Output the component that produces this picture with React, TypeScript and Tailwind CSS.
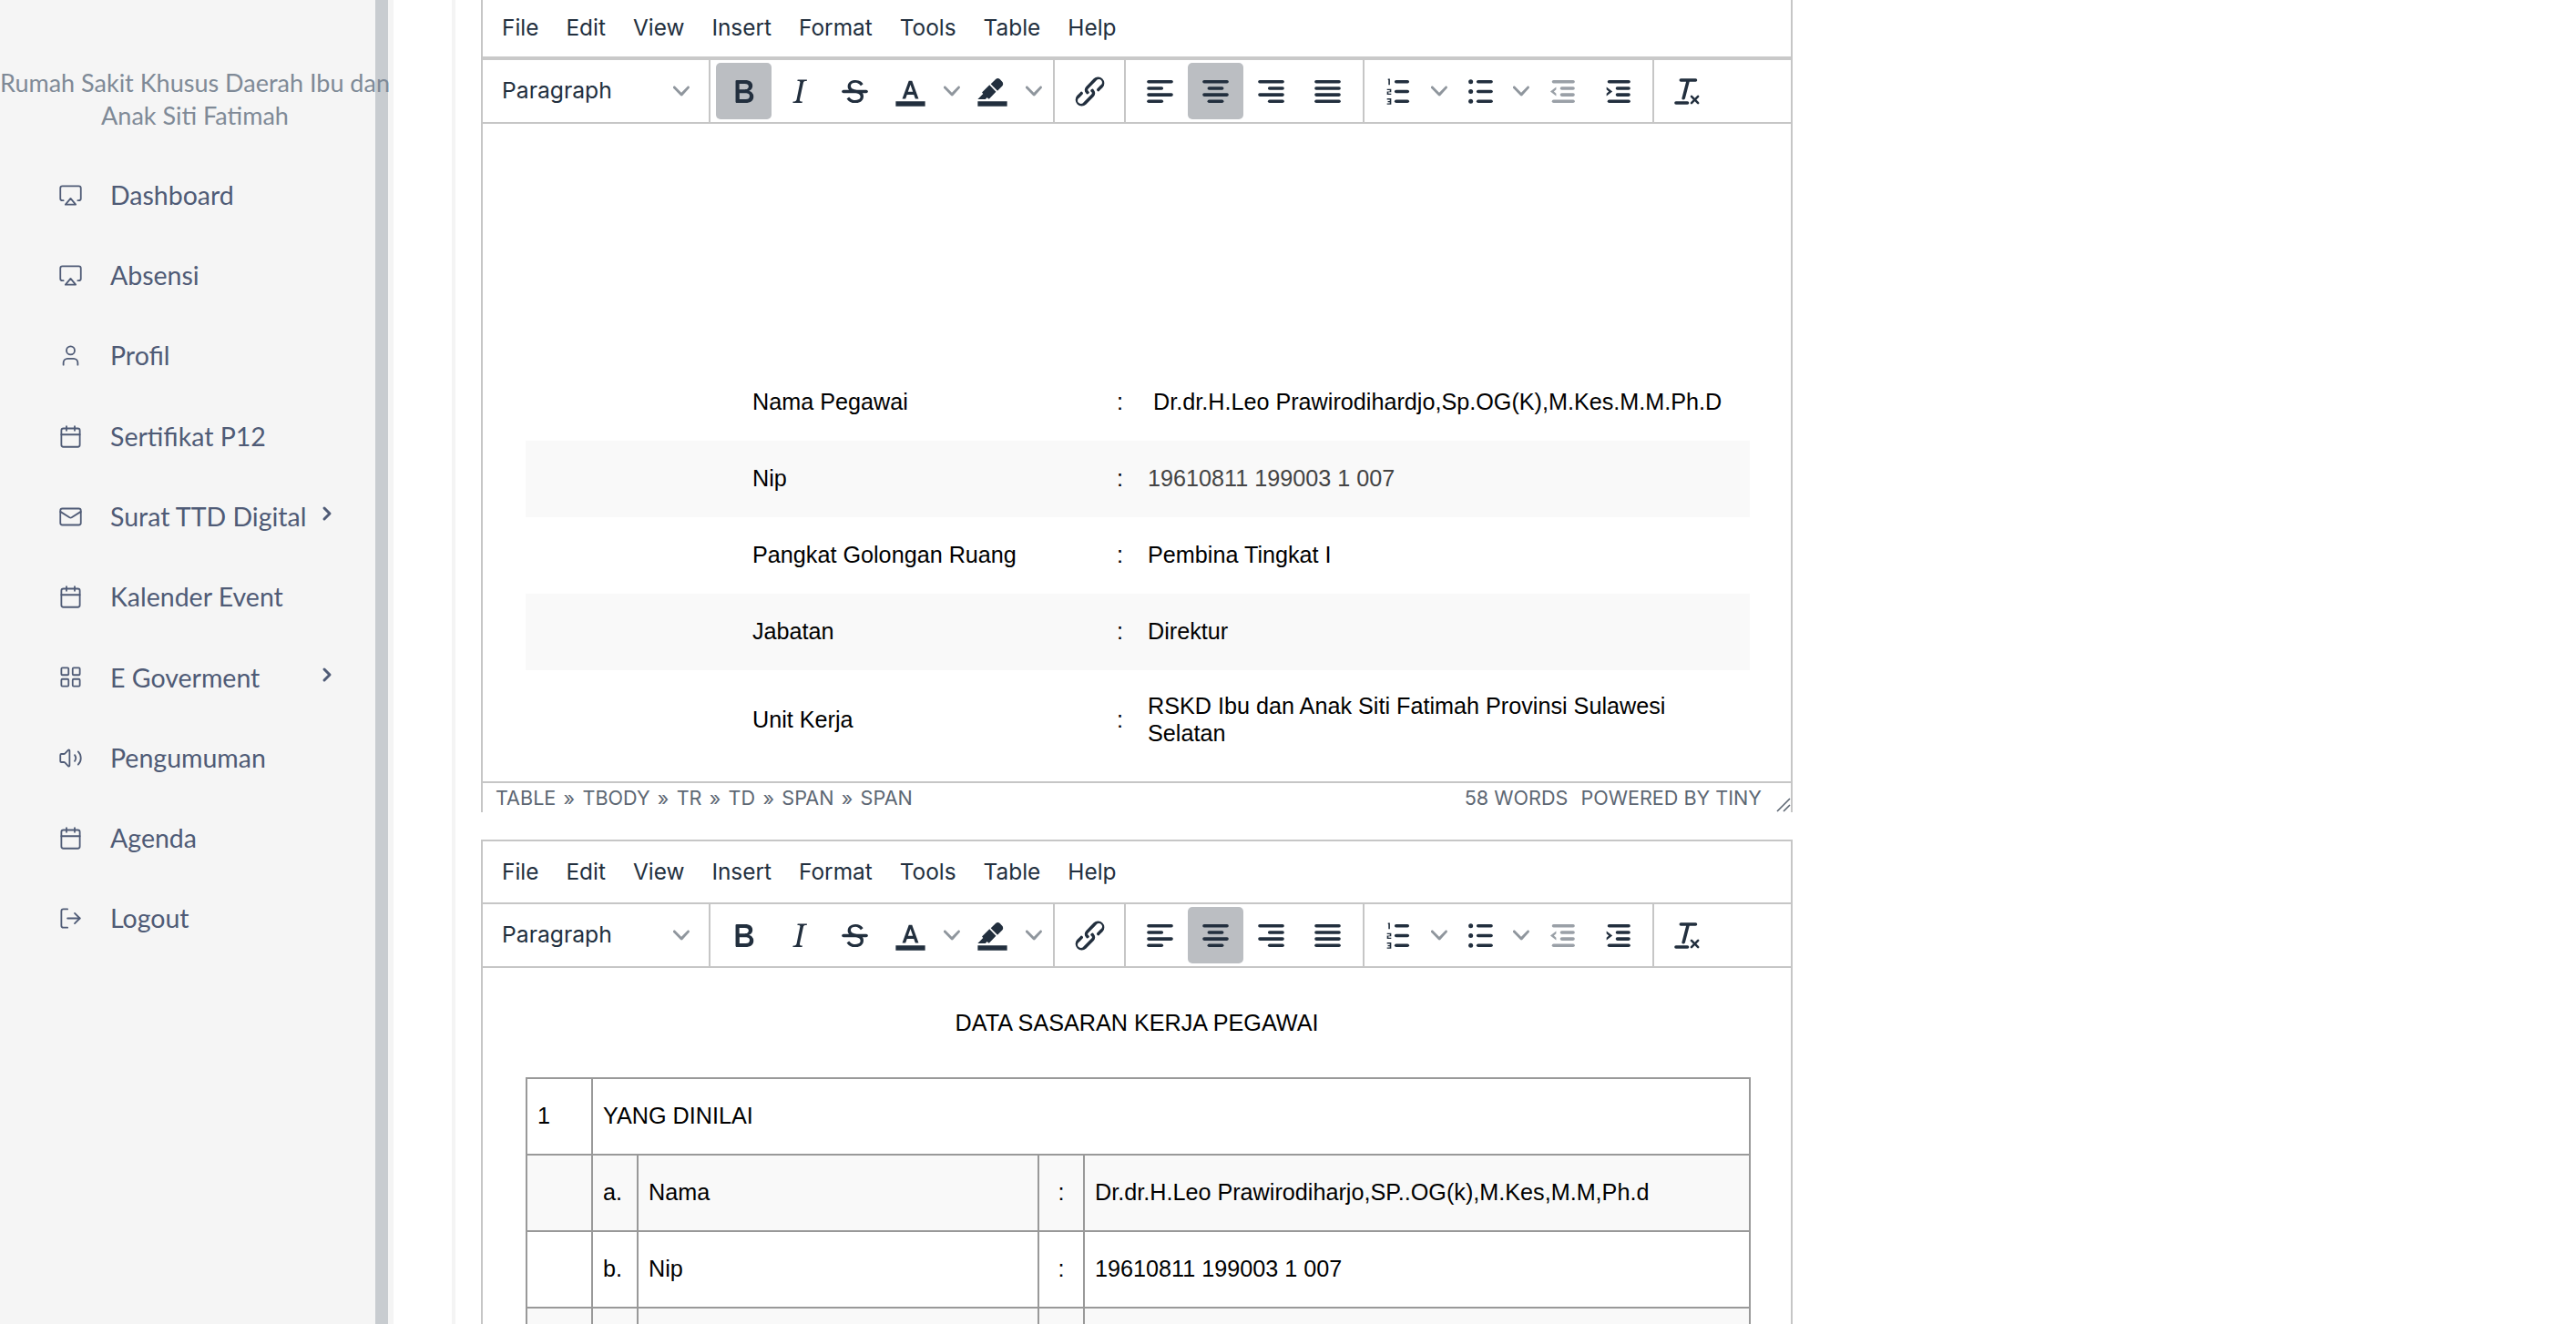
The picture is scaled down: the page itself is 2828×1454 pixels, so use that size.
import React from "react";
import { Airplay, User, Calendar, Mail, LayoutGrid, Volume2, LogOut, ChevronRight } from "lucide-react";

const I = ({ children }: { children: React.ReactNode }) => (
  <svg viewBox="0 0 24 24" width="43" height="43" fill="#222f3e">{children}</svg>
);

const Lines = ({ rows }: { rows: [number, number, number][] }) => (
  <>
    {rows.map(([a, b, y], i) => (
      <line key={i} x1={a} x2={b} y1={y} y2={y} stroke="#222f3e" strokeWidth="2" strokeLinecap="round" />
    ))}
  </>
);

const icons: Record<string, React.ReactNode> = {
  bold: <path d="M7.8 19c-.3 0-.5 0-.6-.2l-.2-.5V5.7c0-.2 0-.4.2-.5l.6-.2h5c1.5 0 2.7.3 3.5 1 .7.6 1.1 1.4 1.1 2.5a3 3 0 0 1-.6 1.9c-.4.6-1 1-1.6 1.2.4.1.9.3 1.3.6s.8.7 1 1.2c.4.4.5 1 .5 1.6 0 1.3-.4 2.3-1.3 3-.8.7-2.1 1-3.8 1H7.8zm5-8.3c.6 0 1.2-.1 1.6-.5.4-.3.6-.7.6-1.3 0-1.1-.8-1.7-2.3-1.7H9.3v3.5h3.4zm.5 6c.7 0 1.3-.1 1.7-.4.4-.4.6-.9.6-1.5s-.2-1-.7-1.4c-.4-.3-1-.4-2-.4H9.4v3.8h4z" />,
  italic: <path d="M16.7 4.7l-.1.9h-.3c-.6 0-1 0-1.4.3-.3.3-.4.6-.5 1.1l-2.1 9.8v.6c0 .5.4.8 1.4.8h.2l-.2.8H8l.2-.8h.2c1.1 0 1.8-.5 2-1.5l2-9.8.1-.5c0-.6-.4-.8-1.4-.8h-.3l.2-.9h5.8z" />,
  strike: (
    <>
      <path d="M15.6 8.5c-.5-.7-1-1.1-1.3-1.3-.6-.4-1.3-.6-2-.6-2.7 0-2.8 1.7-2.8 2.1 0 1.6 1.8 2 3.2 2.3 4.4.9 4.6 2.8 4.6 3.9 0 1.4-.7 4.1-5 4.1A6.2 6.2 0 0 1 7 16.4l1.5-1.1c.4.6 1.6 2 3.7 2 1.6 0 2.5-.4 3-1.2.4-.8.3-2-.8-2.6-.7-.4-1.6-.7-2.9-1-1-.2-3.9-.8-3.9-3.6C7.6 6 10.3 5 12.4 5c2.9 0 4.2 1.6 4.7 2.4l-1.5 1.1z" />
      <path d="M5 11h14a1 1 0 0 1 0 2H5a1 1 0 0 1 0-2z" />
    </>
  ),
  color: (
    <>
      <path d="M3 18h18v3H3z" />
      <path fillRule="evenodd" d="M7 16.5 11 5.5h2l4 11h-2l-.9-2.6H9.9L9 16.5zm3.5-4.4h3L12 7.8z" />
    </>
  ),
  highlight: (
    <>
      <path d="M3 18h18v3H3z" />
      <path d="M7.7 16.7H3l3.3-3.3-.7-.8L10.2 8l4 4.1-4 4.2c-.2.2-.6.2-.8 0l-.6-.7-1.1 1.1zm5-7.5L11 7.4l3-2.9a2 2 0 0 1 2.6 0L18 6c.7.7.7 2 0 2.7l-2.9 2.9-1.8-1.8-.5-.6" />
    </>
  ),
  link: <path d="M6.2 12.3a1 1 0 0 1 1.4 1.4l-2 2a2 2 0 1 0 2.6 2.8l4.8-4.8a1 1 0 0 0 0-1.4 1 1 0 1 1 1.4-1.3 2.9 2.9 0 0 1 0 4L9.6 20a3.9 3.9 0 0 1-5.5-5.5l2-2zm11.6-.6a1 1 0 0 1-1.4-1.4l2-2a2 2 0 1 0-2.6-2.8L11 10.3a1 1 0 0 0 0 1.4A1 1 0 1 1 9.6 13a2.9 2.9 0 0 1 0-4L14.4 4a3.9 3.9 0 0 1 5.5 5.5l-2 2z" />,
  left: <Lines rows={[[5, 19, 6], [5, 13, 10], [5, 19, 14], [5, 13, 18]]} />,
  center: <Lines rows={[[5, 19, 6], [8, 16, 10], [5, 19, 14], [8, 16, 18]]} />,
  right: <Lines rows={[[5, 19, 6], [11, 19, 10], [5, 19, 14], [11, 19, 18]]} />,
  justify: <Lines rows={[[5, 19, 6], [5, 19, 10], [5, 19, 14], [5, 19, 18]]} />,
  num: (
    <>
      <Lines rows={[[11, 18, 6], [11, 18, 12], [11, 18, 18]]} />
      <path d="M6 4.2h1.2V8H6.3V5H6zM5.4 10.4H8v2H6.3v.8H8v.8H5.4v-2h1.7v-.8H5.4zM5.4 16.2H8V20H5.4v-.8h1.7v-.7H5.9v-.7h1.2V17H5.4z" />
    </>
  ),
  bullet: (
    <>
      <Lines rows={[[11, 19, 6], [11, 19, 12], [11, 19, 18]]} />
      <circle cx="6.5" cy="6" r="1.4" />
      <circle cx="6.5" cy="12" r="1.4" />
      <circle cx="6.5" cy="18" r="1.4" />
    </>
  ),
  outdent: (
    <g opacity="0.45">
      <Lines rows={[[7, 19, 6], [12, 19, 10], [12, 19, 14], [7, 19, 18]]} />
      <path d="M8.6 9.2 5 12l3.6 2.8V13.2L7.2 12l1.4-1.2z" />
    </g>
  ),
  indent: (
    <>
      <Lines rows={[[7, 19, 6], [12, 19, 10], [12, 19, 14], [7, 19, 18]]} />
      <path d="M5.4 9.2 9 12l-3.6 2.8v-1.6L6.8 12 5.4 10.8z" />
    </>
  ),
  clear: <path d="M13.2 6a1 1 0 0 1 0 .2l-2.6 10a1 1 0 0 1-1 .8h-.2a.8.8 0 0 1-.8-1l2.6-10H8a1 1 0 1 1 0-2h9a1 1 0 0 1 0 2h-3.8zM5 18h7a1 1 0 0 1 0 2H5a1 1 0 0 1 0-2zm13 1.5L16.5 18 15 19.5a.7.7 0 0 1-1-1l1.5-1.5-1.5-1.5a.7.7 0 0 1 1-1l1.5 1.5 1.5-1.5a.7.7 0 0 1 1 1L17.5 17l1.5 1.5a.7.7 0 0 1-1 1z" />,
};

const Chevron = () => (
  <svg viewBox="0 0 10 10" width="18" height="18" fill="#222f3e" opacity="0.5">
    <path d="M8.7 2.2c.3-.3.8-.3 1 0 .4.4.4.9 0 1.2L5.7 7.8c-.3.3-.9.3-1.2 0L.2 3.4a.8.8 0 0 1 0-1.2c.3-.3.8-.3 1.1 0L5 6l3.7-3.8z" />
  </svg>
);

const Btn = ({ name, active }: { name: string; active?: boolean }) => (
  <div className={`flex h-[62px] w-[61px] items-center justify-center rounded-[5px] ${active ? "bg-[#bbbec2]" : ""}`}>
    <I>{icons[name]}</I>
  </div>
);

const Split = ({ name }: { name: string }) => (
  <div className="flex h-[62px] w-[90px] items-center">
    <Btn name={name} />
    <div className="flex w-[29px] justify-center">
      <Chevron />
    </div>
  </div>
);

const Group = ({ className, children }: { className: string; children: React.ReactNode }) => (
  <div className={`flex h-full items-center border-l-2 border-[#c6c6c6] ${className}`}>{children}</div>
);

const Toolbar = ({ first }: { first?: boolean }) => (
  <div className="box-content flex h-[68px] items-center border-b-2 border-[#c6c6c6]">
    <div className="flex w-[248px] items-center justify-between pl-[21px] pr-[21px] text-[24.7px] text-[#222f3e]">
      <span>Paragraph</span>
      <Chevron />
    </div>
    <Group className="pl-[6px] pr-[7px]">
      <Btn name="bold" active={first} />
      <Btn name="italic" />
      <Btn name="strike" />
      <Split name="color" />
      <Split name="highlight" />
    </Group>
    <Group className="pl-[8px] pr-[7px]">
      <Btn name="link" />
    </Group>
    <Group className="pl-[7px] pr-[9px]">
      <Btn name="left" />
      <Btn name="center" active />
      <Btn name="right" />
      <div className="ml-[1px] -mr-[1px]">
        <Btn name="justify" />
      </div>
    </Group>
    <Group className="pl-[6px] pr-[8px]">
      <Split name="num" />
      <Split name="bullet" />
      <Btn name="outdent" />
      <Btn name="indent" />
    </Group>
    <Group className="pl-[6px]">
      <Btn name="clear" />
    </Group>
  </div>
);

const MenuBar = ({ className }: { className: string }) => (
  <div className={`flex items-center gap-[30px] pl-[21px] text-[24.4px] text-[#222f3e] ${className}`}>
    {["File", "Edit", "View", "Insert", "Format", "Tools", "Table", "Help"].map((m) => (
      <span key={m}>{m}</span>
    ))}
  </div>
);

const nav = [
  { label: "Dashboard", Icon: Airplay },
  { label: "Absensi", Icon: Airplay },
  { label: "Profil", Icon: User },
  { label: "Sertifikat P12", Icon: Calendar },
  { label: "Surat TTD Digital", Icon: Mail, chevron: true },
  { label: "Kalender Event", Icon: Calendar },
  { label: "E Goverment", Icon: LayoutGrid, chevron: true },
  { label: "Pengumuman", Icon: Volume2 },
  { label: "Agenda", Icon: Calendar },
  { label: "Logout", Icon: LogOut },
];

const infoRows: { label: string; value: React.ReactNode; tall?: boolean }[] = [
  { label: "Nama Pegawai", value: <span className="ml-[6px]">Dr.dr.H.Leo Prawirodihardjo,Sp.OG(K),M.Kes.M.M.Ph.D</span> },
  { label: "Nip", value: <span className="text-[#444]">19610811 199003 1 007</span> },
  { label: "Pangkat Golongan Ruang", value: "Pembina Tingkat I" },
  { label: "Jabatan", value: "Direktur" },
  {
    label: "Unit Kerja",
    value: (
      <>
        RSKD Ibu dan Anak Siti Fatimah Provinsi Sulawesi
        <br />
        Selatan
      </>
    ),
    tall: true,
  },
];

const Td = ({ children, colSpan, center }: { children?: React.ReactNode; colSpan?: number; center?: boolean }) => (
  <td colSpan={colSpan} className={`border-2 border-[#999] px-[11px] pb-[2px] align-middle ${center ? "text-center" : ""}`}>
    {children}
  </td>
);

export default function App() {
  return (
    <div className="flex h-[1454px] w-[2828px] overflow-hidden bg-white">
      <aside className="w-[412px] shrink-0 bg-[#f5f5f5] font-['Lato',sans-serif]">
        <div className="relative z-10 w-[428px] pt-[73px] text-center text-[27px] leading-[36px] text-[#7f8a97]">
          Rumah Sakit Khusus Daerah Ibu dan
          <br />
          Anak Siti Fatimah
        </div>
        <nav className="mt-[25px]">
          {nav.map(({ label, Icon, chevron }) => (
            <div key={label} className="flex h-[88.3px] items-center text-[#4f5b76]">
              <div className="flex w-[121px] shrink-0 pl-[64px]">
                <Icon size={27} strokeWidth={1.6} className="shrink-0" />
              </div>
              <span className="w-[226px] shrink-0 text-[28.5px]">{label}</span>
              {chevron && <ChevronRight size={24} strokeWidth={3} className="-mt-[6px] shrink-0" />}
            </div>
          ))}
        </nav>
      </aside>
      <div className="w-[14px] shrink-0 bg-[#c8ccd0]" />
      <div className="w-[6px] shrink-0 bg-[#f4f4f4]" />
      <div className="w-[64px] shrink-0" />
      <div className="w-[4px] shrink-0 bg-[#f4f4f4]" />
      <main className="ml-[28px] w-[1440px] shrink-0 font-['Inter',sans-serif]">
        <section className="border-x-2 border-[#c6c6c6]">
          <MenuBar className="box-content h-[60px] border-b-4 border-[#c9c9c9] pb-[2px]" />
          <Toolbar first />
          <div className="h-[722px] px-[47px] pt-[264px] font-['Liberation_Sans',Arial,sans-serif] text-[25.2px] leading-[30px] text-black">
            <table className="w-[1344px] table-fixed border-collapse">
              <colgroup>
                <col className="w-[235px]" />
                <col className="w-[414px]" />
                <col className="w-[20px]" />
                <col />
              </colgroup>
              <tbody>
                {infoRows.map((r, i) => (
                  <tr key={r.label} className={`${r.tall ? "h-[110px]" : "h-[84px]"} ${i % 2 ? "bg-[#f9f9f9]" : ""}`}>
                    <td />
                    <td className="pb-[2px] pl-[14px]">{r.label}</td>
                    <td className="pb-[2px]">:</td>
                    <td className="pb-[2px] pl-[14px]">{r.value}</td>
                  </tr>
                ))}
              </tbody>
            </table>
          </div>
          <div className="relative flex h-[34px] items-start justify-between border-t-2 border-[#c6c6c6] pl-[14px] pr-[32px] pt-[2px] text-[21.6px] leading-[28px] text-[#5d6773]">
            <span className="[word-spacing:2.2px]">TABLE » TBODY » TR » TD » SPAN » SPAN</span>
            <span>
              58 WORDS<span className="ml-[14px]">POWERED BY TINY</span>
            </span>
            <svg viewBox="0 0 16 16" width="16" height="16" className="absolute right-0 bottom-0">
              <path d="M1 15 15 1M8 15l7-7" stroke="#5d6773" strokeWidth="1.6" />
            </svg>
          </div>
        </section>
        <section className="mt-[30px] border-x-2 border-t-2 border-[#c6c6c6]">
          <MenuBar className="box-content h-[67px] border-b-2 border-[#c6c6c6]" />
          <Toolbar />
          <div className="px-[47px] pt-[45px] font-['Liberation_Sans',Arial,sans-serif] text-[25.2px] leading-[30px] text-black">
            <div className="text-center">DATA SASARAN KERJA PEGAWAI</div>
            <table className="mt-[45px] w-[1345px] table-fixed border-collapse">
              <colgroup>
                <col className="w-[72px]" />
                <col className="w-[50px]" />
                <col className="w-[440px]" />
                <col className="w-[50px]" />
                <col />
              </colgroup>
              <tbody>
                <tr className="h-[84px]">
                  <Td>1</Td>
                  <Td colSpan={4}>YANG DINILAI</Td>
                </tr>
                <tr className="h-[84px] bg-[#f9f9f9]">
                  <Td />
                  <Td>a.</Td>
                  <Td>Nama</Td>
                  <Td center>:</Td>
                  <Td>Dr.dr.H.Leo Prawirodiharjo,SP..OG(k),M.Kes,M.M,Ph.d</Td>
                </tr>
                <tr className="h-[84px]">
                  <Td />
                  <Td>b.</Td>
                  <Td>Nip</Td>
                  <Td center>:</Td>
                  <Td>19610811 199003 1 007</Td>
                </tr>
                <tr className="h-[84px] bg-[#f9f9f9]">
                  <Td />
                  <Td />
                  <Td />
                  <Td />
                  <Td />
                </tr>
              </tbody>
            </table>
          </div>
        </section>
      </main>
    </div>
  );
}
